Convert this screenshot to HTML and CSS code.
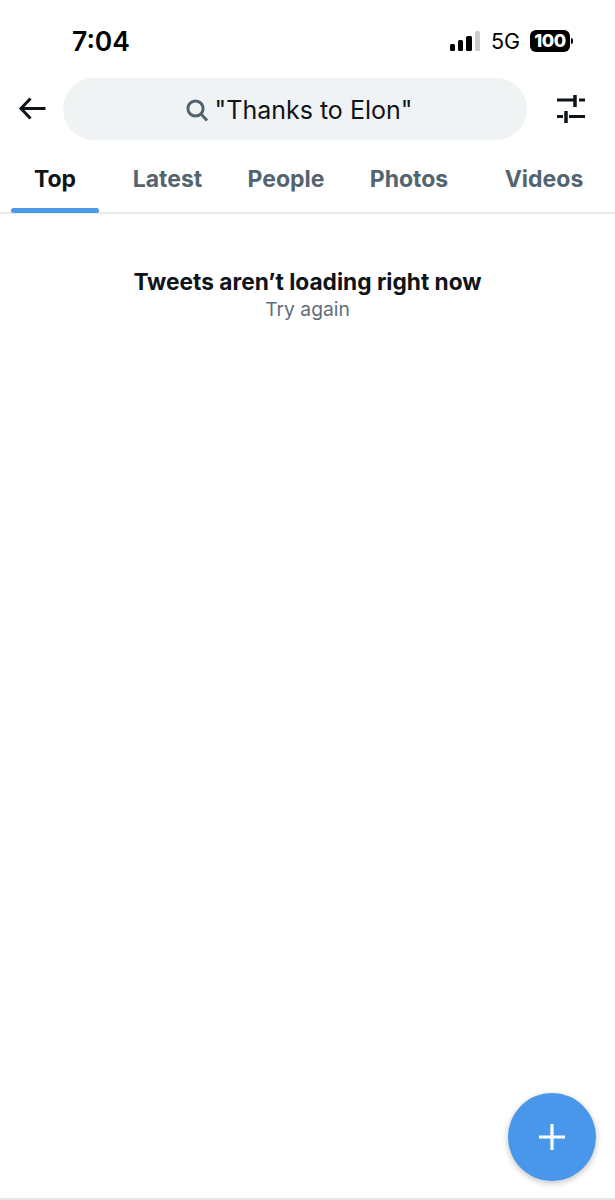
FILE: index.html
```html
<!DOCTYPE html>
<html lang="en">
<head>
  <meta charset="UTF-8">
  <meta name="viewport" content="width=device-width, initial-scale=1.0">
  <title>Search</title>
  <link rel="stylesheet" href="styles.css">
</head>
<body>
  <div class="screen">
    <!-- Status bar -->
    <div class="status">
      <span class="time">7:04</span>
      <div class="status-right">
        <div class="signal">
          <span class="bar bar1"></span>
          <span class="bar bar2"></span>
          <span class="bar bar3"></span>
          <span class="bar bar4"></span>
        </div>
        <span class="network">5G</span>
        <span class="battery">100</span>
        <span class="battery-tip"></span>
      </div>
    </div>

    <!-- Search row -->
    <div class="search-row">
      <svg class="back" width="30" height="24" viewBox="0 0 30 24" fill="none" stroke="#0f1419" stroke-width="3">
        <path d="M28.500 11.500H4M13.500 1.500 4 11.500l9.500 10"/>
      </svg>
      <div class="search-box">
        <svg class="search-icon" width="24" height="24" viewBox="0 0 24 24" fill="none" stroke="#536471" stroke-width="3">
          <circle cx="10.5" cy="10.5" r="7.6"/>
          <path d="m16 16 6 6.500"/>
        </svg>
        <span class="query">"Thanks to Elon"</span>
      </div>
      <svg class="filter" width="30" height="30" viewBox="0 0 30 30" fill="none" stroke="#0f1419" stroke-width="3">
        <path d="M1 6H18M23 6H29M1 22.500H7M13 22.500H29"/>
        <path d="M19 1V13M10 17V29" stroke-width="3.500"/>
      </svg>
    </div>

    <!-- Tabs -->
    <div class="tabs">
      <div class="tab active">Top</div>
      <div class="tab">Latest</div>
      <div class="tab">People</div>
      <div class="tab">Photos</div>
      <div class="tab">Videos</div>
    </div>

    <div class="message">
      <div class="message-title">Tweets aren’t loading right now</div>
      <div class="message-retry">Try again</div>
    </div>

    <div class="fab">
      <svg width="28" height="28" viewBox="0 0 28 28" fill="none" stroke="#fff" stroke-width="3.2">
        <path d="M14 1V27M1 14H27"/>
      </svg>
    </div>
  </div>
</body>
</html>
```

FILE: styles.css
```css
* {
  box-sizing: border-box;
}
body {
  margin: 0;
  background: #fff;
  font-family: Inter, "Liberation Sans", sans-serif;
  color: #0f1419;
}
.screen {
  position: relative;
  width: 615px;
  height: 1200px;
  overflow: hidden;
  border-bottom: 2px solid #e4e6e8;
}
.status {
  display: flex;
  justify-content: space-between;
  align-items: center;
  height: 78px;
  padding: 4px 42px 0 72px;
}
.time {
  font-size: 26.5px;
  font-weight: 600;
  color: #000;
}
.status-right {
  display: flex;
  align-items: center;
}
.signal {
  display: flex;
  align-items: flex-end;
  gap: 3px;
  height: 20px;
  margin-right: 11px;
}
.bar {
  width: 5.25px;
  border-radius: 1.5px;
  background: #000;
}
.bar1 { height: 7px; }
.bar2 { height: 11px; }
.bar3 { height: 15px; }
.bar4 { height: 20px; background: #ccc; }
.network {
  font-size: 21.5px;
  margin-right: 10px;
  color: #000;
}
.battery {
  width: 40px;
  height: 22px;
  line-height: 22px;
  border-radius: 6px;
  background: #000;
  color: #fff;
  font-size: 18px;
  font-weight: 800;
  text-align: center;
  letter-spacing: -0.5px;
}
.battery-tip {
  width: 2px;
  height: 6px;
  margin-left: 1px;
  border-radius: 0 2px 2px 0;
  background: #000;
}
.search-row {
  display: flex;
  align-items: center;
  height: 62px;
  padding-left: 17px;
}
.back {
  flex: none;
  width: 30px;
  margin-right: 16px;
}
.search-box {
  display: flex;
  align-items: center;
  justify-content: center;
  gap: 6px;
  width: 464px;
  height: 62px;
  padding: 2px 0 0 7px;
  border-radius: 31px;
  background: #eff3f4;
}
.search-icon {
  flex: none;
}
.query {
  font-size: 25px;
  color: #0f1419;
}
.filter {
  flex: none;
  margin-left: 29px;
}
.tabs {
  position: relative;
  display: grid;
  grid-template-columns: 110px 115px 122px 124px 146px;
  height: 74px;
  border-bottom: 2px solid #e7e9ea;
}
.tab {
  padding-top: 25px;
  font-size: 23px;
  font-weight: 700;
  color: #536471;
  text-align: center;
}
.active {
  color: #0f1419;
}
.active::after {
  content: "";
  position: absolute;
  left: 11px;
  bottom: -1px;
  width: 88px;
  height: 5px;
  border-radius: 3px;
  background: #4c99e8;
}
.message {
  padding-top: 54px;
  text-align: center;
}
.message-title {
  font-size: 22.7px;
  font-weight: 700;
  line-height: 28px;
}
.message-retry {
  font-size: 19.3px;
  line-height: 26px;
  color: #5f6e7b;
}
.fab {
  position: absolute;
  left: 508px;
  top: 1093px;
  display: flex;
  align-items: center;
  justify-content: center;
  width: 88px;
  height: 88px;
  border-radius: 50%;
  background: #4897ea;
  box-shadow: 0 2px 6px rgba(0, 0, 0, 0.25);
}
```
